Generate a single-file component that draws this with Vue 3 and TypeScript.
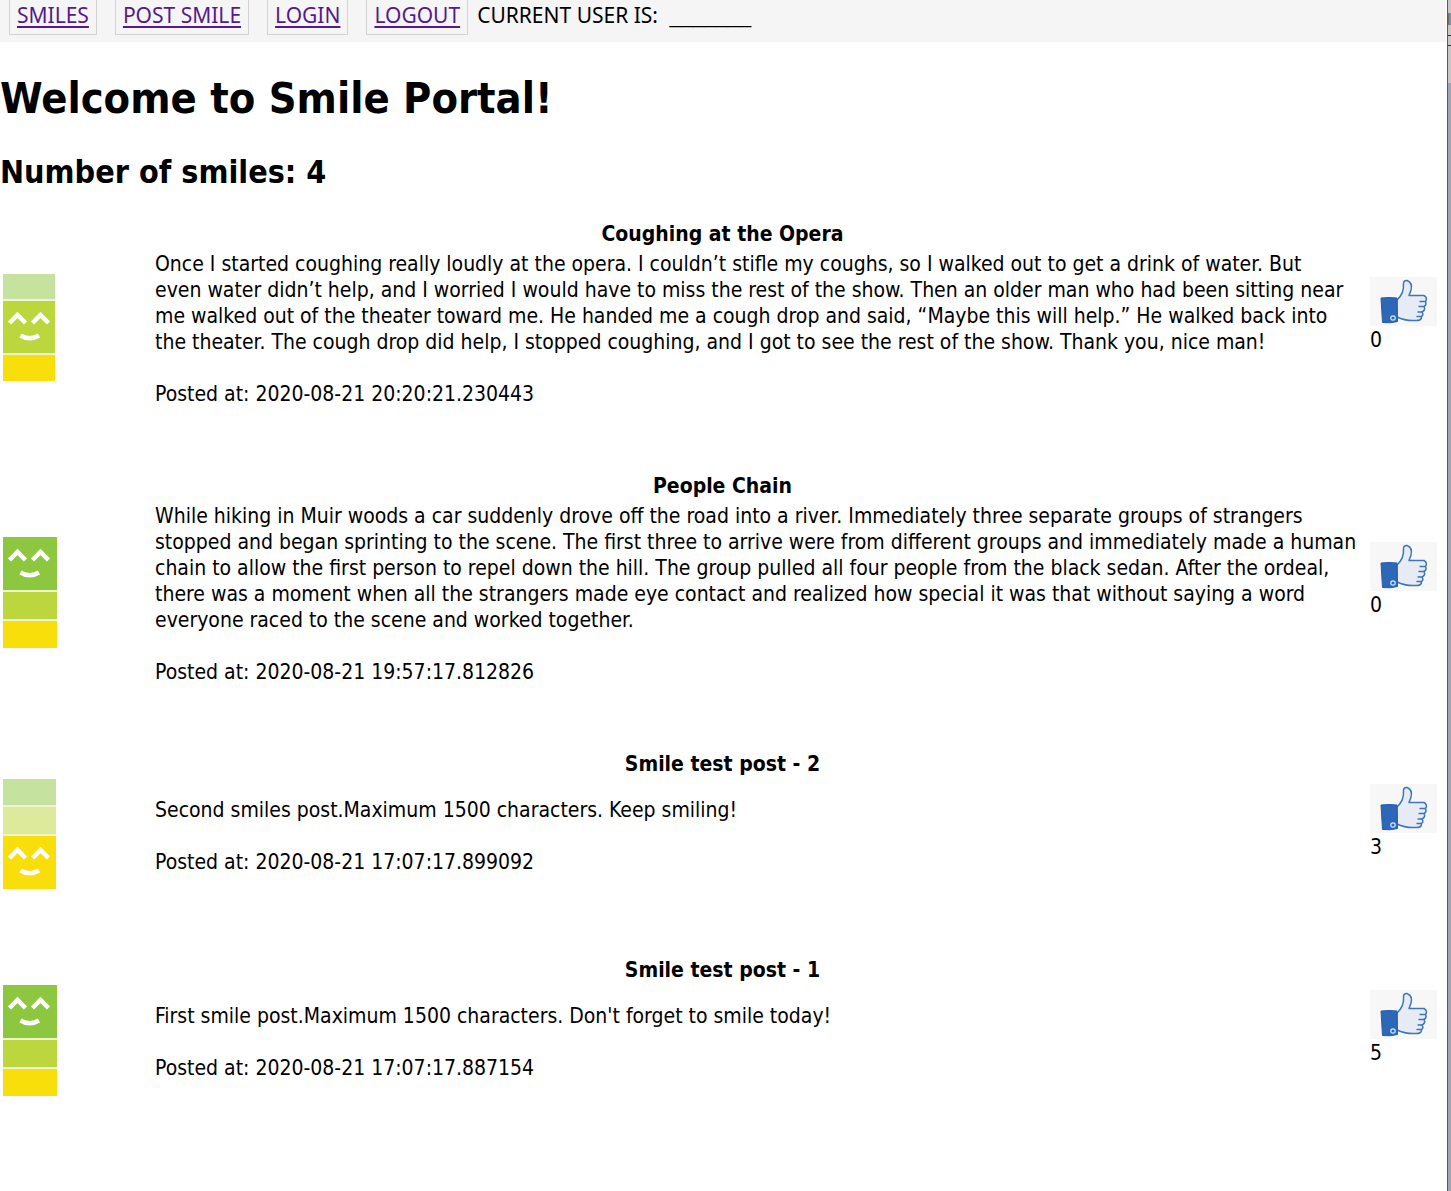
<script setup lang="ts">
type Mood = 'green' | 'lime' | 'yellow'

interface Smile {
  id: number
  title: string
  lines: string[]
  postedAt: string
  likes: number
  mood: Mood
  short: boolean
}

interface Block {
  y: number
  h: number
  fill: string
}

const links: string[] = ['SMILES', 'POST SMILE', 'LOGIN', 'LOGOUT']

const smiles: Smile[] = [
  {
    id: 4,
    title: 'Coughing at the Opera',
    lines: [
      'Once I started coughing really loudly at the opera. I couldn’t stifle my coughs, so I walked out to get a drink of water. But',
      'even water didn’t help, and I worried I would have to miss the rest of the show. Then an older man who had been sitting near',
      'me walked out of the theater toward me. He handed me a cough drop and said, “Maybe this will help.” He walked back into',
      'the theater. The cough drop did help, I stopped coughing, and I got to see the rest of the show. Thank you, nice man!',
    ],
    postedAt: '2020-08-21 20:20:21.230443',
    likes: 0,
    mood: 'lime',
    short: false,
  },
  {
    id: 3,
    title: 'People Chain',
    lines: [
      'While hiking in Muir woods a car suddenly drove off the road into a river. Immediately three separate groups of strangers',
      'stopped and began sprinting to the scene. The first three to arrive were from different groups and immediately made a human',
      'chain to allow the first person to repel down the hill. The group pulled all four people from the black sedan. After the ordeal,',
      'there was a moment when all the strangers made eye contact and realized how special it was that without saying a word',
      'everyone raced to the scene and worked together.',
    ],
    postedAt: '2020-08-21 19:57:17.812826',
    likes: 0,
    mood: 'green',
    short: false,
  },
  {
    id: 2,
    title: 'Smile test post - 2',
    lines: ['Second smiles post.Maximum 1500 characters. Keep smiling!'],
    postedAt: '2020-08-21 17:07:17.899092',
    likes: 3,
    mood: 'yellow',
    short: true,
  },
  {
    id: 1,
    title: 'Smile test post - 1',
    lines: ["First smile post.Maximum 1500 characters. Don't forget to smile today!"],
    postedAt: '2020-08-21 17:07:17.887154',
    likes: 5,
    mood: 'green',
    short: true,
  },
]

const blocks: Record<Mood, Block[]> = {
  lime: [
    { y: 0, h: 25, fill: '#c5e29f' },
    { y: 27, h: 52, fill: '#bcd63d' },
    { y: 81, h: 26, fill: '#f8df0c' },
  ],
  green: [
    { y: 0, h: 53, fill: '#8dc73f' },
    { y: 55, h: 27, fill: '#bcd63d' },
    { y: 84, h: 27, fill: '#f8df0c' },
  ],
  yellow: [
    { y: 0, h: 26, fill: '#c5e29f' },
    { y: 28, h: 27, fill: '#dde99b' },
    { y: 57, h: 53, fill: '#f8df0c' },
  ],
}

const faceTop: Record<Mood, number> = { green: 0, lime: 26, yellow: 56 }
const meterHeight: Record<Mood, number> = { green: 111, lime: 107, yellow: 110 }
const meterWidth: Record<Mood, number> = { green: 54, lime: 52, yellow: 53 }
</script>

<template>
  <div class="window">
    <div class="page">
      <nav class="nav">
        <a v-for="link in links" :key="link" href="#" class="nav-link">{{ link }}</a>
        <span class="user">CURRENT USER IS: <span class="blank">_______</span></span>
      </nav>

      <main>
        <h1>Welcome to Smile Portal!</h1>
        <h2>Number of smiles: {{ smiles.length }}</h2>

        <article v-for="smile in smiles" :key="smile.id" class="smile" :class="{ short: smile.short }">
          <div class="mood">
            <svg :width="meterWidth[smile.mood]" :height="meterHeight[smile.mood]" role="img" aria-label="happiness level">
              <rect width="100%" height="100%" fill="#eef5d2" />
              <rect
                v-for="block in blocks[smile.mood]"
                :key="block.y"
                x="0"
                :y="block.y"
                width="100%"
                :height="block.h"
                :fill="block.fill"
              />
              <g :transform="`translate(0 ${faceTop[smile.mood]})`" fill="none" stroke="#fff" stroke-width="4.500">
                <path d="M6.500 23l8-8 8 8M29.500 23l8-8 8 8" />
                <path d="M17.500 35.500q9 5.500 18.500 0" />
              </g>
            </svg>
          </div>
          <div class="content">
            <h3>{{ smile.title }}</h3>
            <p class="text">{{ smile.lines.join('\n') }}</p>
            <p class="posted">Posted at: {{ smile.postedAt }}</p>
          </div>
          <div class="likes">
            <button type="button" class="like" aria-label="Like">
              <svg width="67" height="49" viewBox="0 0 67 49">
                <path
                  d="M27 23C32 18 34 14 33.500 6Q34 3 37 3.500C41 5 42 9 41 13Q40 16 39 18.500H54Q58 21 55.500 24.500Q57 28 54 29.500Q56 33 52 35Q54 38 51.500 39.500Q52 44 45 43.500Q35 44 27 40Z"
                  fill="#e7ebf4"
                  stroke="#3e76b9"
                  stroke-width="1.500"
                  stroke-linejoin="round"
                />
                <path d="M50 24.500h5M49 29.500h5M48 35h4M47 39.500h4" stroke="#3e76b9" stroke-width="1.300" stroke-linecap="round" />
                <path d="M11 21q8-1 16 0l.5 23.500q-7 2-15 1Z" fill="#2d68b8" stroke="#2a5ca5" stroke-linejoin="round" />
                <circle cx="23" cy="41" r="2.200" fill="none" stroke="#d8e6f6" stroke-width="1.200" />
              </svg>
            </button>
            <span>{{ smile.likes }}</span>
          </div>
        </article>
      </main>
    </div>
    <div class="backdrop" aria-hidden="true">
      <div class="toolbar">
        <span class="tool"></span>
        <span class="field"></span>
      </div>
    </div>
  </div>
</template>

<style>
body {
  margin: 0;
}
</style>

<style scoped>
.window {
  display: flex;
  min-height: 100vh;
  background: #fff;
  color: #000;
  font-family: 'DejaVu Sans Condensed', 'DejaVu Sans', sans-serif;
  font-size: 21px;
  line-height: 26px;
}

.page {
  flex: 1;
  min-width: 0;
}

.nav {
  display: flex;
  height: 42px;
  margin-right: 1px;
  padding-left: 9px;
  box-sizing: border-box;
  background: #f5f5f5;
  font-family: 'Noto Sans', sans-serif;
}

.nav-link {
  height: 32px;
  margin-right: 18px;
  padding: 2px 7px 0;
  border: 1px solid #d3d3d3;
  border-top: 0;
  color: #551a8b;
  text-underline-offset: 3px;
}

.user {
  margin-left: -9px;
  padding-top: 2px;
}

.blank {
  margin-left: 6px;
  font-family: 'Liberation Sans', sans-serif;
}

h1 {
  margin: 28px 0 0;
  font-size: 43px;
  line-height: 56px;
}

h2 {
  margin: 26px 0 29px;
  font-size: 32px;
  line-height: 40px;
}

.smile {
  display: flex;
  align-items: center;
  margin-bottom: 64px;
}

.mood {
  flex: none;
  width: 152px;
  padding: 24px 0 0 3px;
  box-sizing: border-box;
}

.mood svg,
.like svg {
  display: block;
}

.content {
  flex: 1;
  min-width: 0;
  padding: 0 0 2px 3px;
}

.text {
  white-space: pre-line;
}

.short .content {
  padding-bottom: 18px;
}

.short .text {
  padding-top: 16px;
}

.likes {
  display: flex;
  flex: none;
  flex-direction: column;
  width: 77px;
}

h3 {
  margin: 0 0 4px;
  padding-right: 80px;
  font-size: 21px;
  line-height: 26px;
  text-align: center;
}

.content p {
  margin: 0;
}

.content .posted {
  margin-top: 26px;
}

.like {
  width: 67px;
  margin-bottom: 1px;
  padding: 0;
  border: 0;
  background: #f7f7f7;
}

.backdrop {
  width: 4px;
  box-sizing: border-box;
  border-left: 1px solid #555b66;
  background: #9fa5b5;
}

.toolbar {
  height: 83px;
  padding-top: 13px;
  box-sizing: border-box;
  background: #c8c6c6;
}

.tool {
  display: block;
  height: 12px;
  border-left: 1px solid #8a6a48;
  background: #5b96d8;
}

.field {
  display: block;
  height: 9px;
  margin-top: 10px;
  border: solid #333;
  border-width: 1px 0;
}
</style>
